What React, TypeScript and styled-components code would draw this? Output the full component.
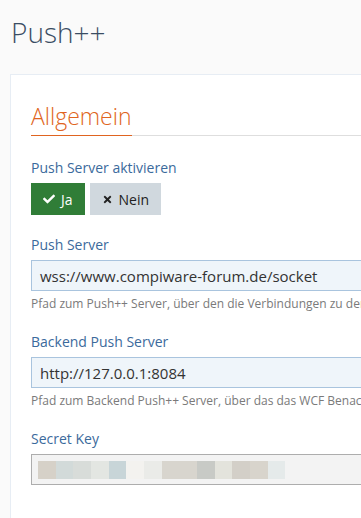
import React from "react";
import styled, { createGlobalStyle } from "styled-components";
import { FaCheck, FaTimes } from "react-icons/fa";

const GlobalStyle = createGlobalStyle`
  html, body {
    margin: 0;
    padding: 0;
    background: #fafafa;
    overflow: hidden;
  }
  body {
    font-family: "Open Sans", "Noto Sans", sans-serif;
    color: #333;
  }
`;

const secretCells = [
  "#d6d1c8",
  "#d2dad9",
  "#d8dcd9",
  "#e3e6e2",
  "#c8d5d8",
  "#f3f2ef",
  "#eaebe8",
  "#d8d5ce",
  "#d8d5ce",
  "#c8cac6",
  "#e3e3dc",
  "#d3cfc8",
  "#d8d4cc",
  "#e5eaea",
];

function App() {
  return (
    <Page>
      <GlobalStyle />
      <PageTitle>Push++</PageTitle>
      <Card>
        <SectionTitle>
          <span>Allgemein</span>
        </SectionTitle>

        <Field>
          <Label>Push Server aktivieren</Label>
          <ButtonRow>
            <ToggleButton $active>
              <FaCheck size={12} /> Ja
            </ToggleButton>
            <ToggleButton>
              <FaTimes size={11} /> Nein
            </ToggleButton>
          </ButtonRow>
        </Field>

        <Field>
          <Label>Push Server</Label>
          <Input>wss://www.compiware-forum.de/socket</Input>
          <Hint>
            Pfad zum Push++ Server, über den die Verbindungen zu den Clients
            hergestellt werden.
          </Hint>
        </Field>

        <Field>
          <Label>Backend Push Server</Label>
          <Input>http://127.0.0.1:8084</Input>
          <Hint>
            Pfad zum Backend Push++ Server, über das das WCF Benachrichtigungen
            verschickt.
          </Hint>
        </Field>

        <Field>
          <Label>Secret Key</Label>
          <Input $disabled>
            <Blur>
              {secretCells.map((c, i) => (
                <BlurCell key={i} $color={c} />
              ))}
            </Blur>
          </Input>
        </Field>
      </Card>
    </Page>
  );
}

const Page = styled.div`
  width: 361px;
  height: 518px;
  overflow: hidden;
  padding: 0 0 0 10px;
  box-sizing: border-box;
`;

const PageTitle = styled.h1`
  margin: 0;
  padding: 14px 0 0 1px;
  height: 60px;
  box-sizing: border-box;
  font-size: 28px;
  font-weight: 300;
  line-height: 36px;
  color: #3a4d63;
  white-space: nowrap;
`;

const Card = styled.div`
  margin-top: 14px;
  width: 600px;
  min-height: 500px;
  background: #fff;
  border-top: 1px solid #e7edf4;
  border-left: 1px solid #e7edf4;
  padding: 24px 20px 20px 20px;
`;

const SectionTitle = styled.h2`
  margin: 0 0 22px;
  font-size: 23px;
  font-weight: 300;
  line-height: 35px;
  color: #e06420;
  border-bottom: 1px solid #dedede;
  white-space: nowrap;

  span {
    display: inline-block;
    border-bottom: 1px solid #e06420;
    margin-bottom: -1px;
    padding-bottom: 1px;
  }
`;

const Field = styled.div`
  margin-bottom: 20px;
`;

const Label = styled.div`
  font-size: 14px;
  line-height: 20px;
  color: #3b6a9c;
  margin-bottom: 5px;
  white-space: nowrap;
`;

const ButtonRow = styled.div`
  display: flex;
  gap: 5px;
`;

const ToggleButton = styled.div<{ $active?: boolean }>`
  display: flex;
  align-items: center;
  gap: 6px;
  height: 32px;
  padding: 0 12px;
  box-sizing: border-box;
  font-size: 14px;
  background: ${(p) => (p.$active ? "#307d37" : "#d0d8de")};
  color: ${(p) => (p.$active ? "#fff" : "#222")};
  svg {
    color: ${(p) => (p.$active ? "#fff" : "#222")};
  }
`;

const Input = styled.div<{ $disabled?: boolean }>`
  display: flex;
  align-items: center;
  height: 31px;
  box-sizing: border-box;
  padding: 0 8px;
  font-size: 15px;
  color: #333;
  background: ${(p) => (p.$disabled ? "#f3f3f3" : "#eff5fa")};
  border: 1px solid ${(p) => (p.$disabled ? "#adadad" : "#a9c4de")};
  white-space: nowrap;
`;

const Hint = styled.div`
  margin-top: 5px;
  font-size: 12px;
  line-height: 16px;
  color: #7a7a7a;
  white-space: nowrap;
`;

const Blur = styled.div`
  display: flex;
  margin-left: -2px;
  height: 18px;
`;

const BlurCell = styled.div<{ $color: string }>`
  width: 17.67px;
  height: 18px;
  background: ${(p) => p.$color};
`;

export default App;
